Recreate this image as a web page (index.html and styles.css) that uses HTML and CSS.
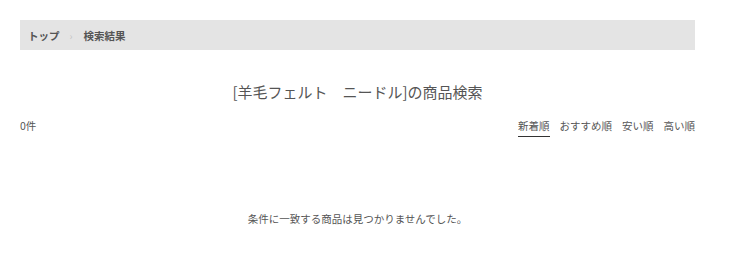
FILE: index.html
```html
<!DOCTYPE html>
<html lang="ja">
<head>
<meta charset="utf-8">
<link rel="stylesheet" href="styles.css">
</head>
<body>
<div class="page">
  <nav class="crumbs">
    <a class="crumb">トップ</a>
    <span class="sep">›</span>
    <span class="crumb">検索結果</span>
  </nav>
  <h1 class="title">[羊毛フェルト　ニードル]の商品検索</h1>
  <div class="bar">
    <span class="count">0件</span>
    <ul class="sort">
      <li class="sort-item active">新着順</li>
      <li class="sort-item">おすすめ順</li>
      <li class="sort-item">安い順</li>
      <li class="sort-item">高い順</li>
    </ul>
  </div>
  <p class="empty">条件に一致する商品は見つかりませんでした。</p>
</div>
</body>
</html>
```
FILE: styles.css
```css
html, body {
  margin: 0;
  padding: 0;
  background: #fff;
}
body {
  font-family: "Noto Sans CJK JP", "Noto Sans", sans-serif;
  color: #555;
}
.page {
  width: 675px;
  margin: 0 0 0 20px;
  padding-top: 20px;
}
.crumbs {
  display: flex;
  align-items: center;
  height: 30px;
  background: #e4e4e4;
  padding-left: 8px;
  font-size: 10.5px;
  font-weight: bold;
  color: #555;
}
.crumb {
  color: #555;
}
.sep {
  color: #c4c4c4;
  font-weight: normal;
  margin: 0 11px 0 10px;
  font-size: 10px;
}
.title {
  margin: 30px 0 0;
  text-align: center;
  font-size: 15px;
  line-height: 24px;
  font-weight: normal;
  color: #555;
}
.bar {
  display: flex;
  justify-content: space-between;
  align-items: flex-start;
  margin-top: 14px;
  font-size: 10.5px;
  color: #555;
}
.count {
  line-height: 16px;
}
.sort {
  display: flex;
  list-style: none;
  margin: 0;
  padding: 0;
  gap: 10px;
}
.sort-item {
  line-height: 16px;
  padding-bottom: 2px;
  border-bottom: 1px solid transparent;
}
.sort-item.active {
  border-bottom-color: #333;
}
.empty {
  margin: 74px 0 0;
  text-align: center;
  font-size: 10.5px;
  line-height: 16px;
  color: #555;
}
```
